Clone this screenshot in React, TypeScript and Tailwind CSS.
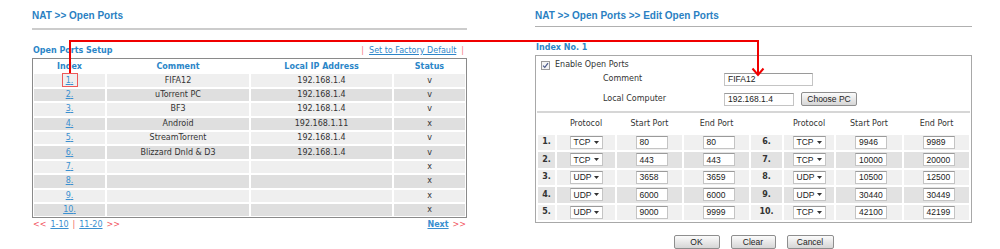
import React from 'react'

const verdana = "font-['DejaVu_Sans',Verdana,sans-serif]"
const arial = "font-['Liberation_Sans',Arial,sans-serif]"

interface PortEntry {
  comment: string
  ip: string
  status: string
}

const entries: PortEntry[] = [
  { comment: 'FIFA12', ip: '192.168.1.4', status: 'v' },
  { comment: 'uTorrent PC', ip: '192.168.1.4', status: 'v' },
  { comment: 'BF3', ip: '192.168.1.4', status: 'v' },
  { comment: 'Android', ip: '192.168.1.11', status: 'x' },
  { comment: 'StreamTorrent', ip: '192.168.1.4', status: 'v' },
  { comment: 'Blizzard Dnld & D3', ip: '192.168.1.4', status: 'v' },
  { comment: '', ip: '', status: 'x' },
  { comment: '', ip: '', status: 'x' },
  { comment: '', ip: '', status: 'x' },
  { comment: '', ip: '', status: 'x' }
]

type PortRange = [string, string, string]

const portRows: { left: PortRange; right: PortRange }[] = [
  { left: ['TCP', '80', '80'], right: ['TCP', '9946', '9989'] },
  { left: ['TCP', '443', '443'], right: ['TCP', '10000', '20000'] },
  { left: ['UDP', '3658', '3659'], right: ['UDP', '10500', '12500'] },
  { left: ['UDP', '6000', '6000'], right: ['UDP', '30440', '30449'] },
  { left: ['UDP', '9000', '9999'], right: ['TCP', '42100', '42199'] }
]

const Cell = ({ bg, children, className = '' }: { bg: string; children?: React.ReactNode; className?: string }) => (
  <div className={`${bg} flex items-center justify-center ${className}`}>{children}</div>
)

const TextBox = ({ value, className = '' }: { value: string; className?: string }) => (
  <div
    className={`h-[13px] bg-white border border-[#c4c4c4] border-t-[#9a9a9a] pl-[3px] flex items-center text-[8.5px] leading-[10px] text-[#222] ${arial} ${className}`}
  >
    {value}
  </div>
)

const SelectBox = ({ value }: { value: string }) => (
  <div
    className={`w-[33px] h-[13px] bg-white border border-[#c4c4c4] border-t-[#9a9a9a] pl-[3px] pr-[3px] flex items-center justify-between text-[8.5px] leading-[10px] text-[#222] ${arial}`}
  >
    <span>{value}</span>
    <svg width="5" height="3" viewBox="0 0 5 3">
      <path d="M0 0h5L2.5 3z" fill="#333" />
    </svg>
  </div>
)

const GrayButton = ({ label, className = '' }: { label: string; className?: string }) => (
  <div
    className={`h-[14px] flex items-center justify-center rounded-[2px] border border-[#8e8e8e] bg-gradient-to-b from-[#fbfbfb] to-[#d6d6d6] text-[8.5px] leading-[10px] text-[#222] ${arial} ${className}`}
  >
    {label}
  </div>
)

const OpenPortsList = () => (
  <div className="ml-[32px] w-[435px]">
    <div className={`pt-[10px] text-[10px] leading-[12px] font-bold text-[#2a7fc2] ${arial}`}>NAT &gt;&gt; Open Ports</div>
    <div className="mt-[6px] h-[2px] bg-[#cccccc]" />
    <div className={`mt-[16px] flex items-center justify-between text-[8px] leading-[10px] ${verdana}`}>
      <span className="pl-[1px] font-bold text-[#2b86c8]">Open Ports Setup</span>
      <span className="flex items-center gap-[5px] pr-[3px]">
        <span className="text-[#f47b86]">|</span>
        <span className="text-[#2e86c9] underline">Set to Factory Default</span>
        <span className="text-[#f47b86]">|</span>
      </span>
    </div>
    <div
      className={`mt-[2px] border border-[#8a8a8a] p-[1px] grid grid-cols-[71px_142px_141px_71px] gap-[2px] auto-rows-[12.4px] text-[8px] leading-[10px] text-[#333] ${verdana}`}
    >
      <Cell bg="bg-white" className="h-[13px] font-bold text-[#2b86c8]">Index</Cell>
      <Cell bg="bg-white" className="h-[13px] font-bold text-[#2b86c8]">Comment</Cell>
      <Cell bg="bg-white" className="h-[13px] font-bold text-[#2b86c8]">Local IP Address</Cell>
      <Cell bg="bg-white" className="h-[13px] font-bold text-[#2b86c8]">Status</Cell>
      {entries.map((entry, i) => {
        const bg = i % 2 === 0 ? 'bg-[#efefef]' : 'bg-[#dfdfdf]'
        return (
          <React.Fragment key={i}>
            <Cell bg={bg}>
              <span className="text-[#3a8fd0] underline">{i + 1}.</span>
            </Cell>
            <Cell bg={bg}>{entry.comment}</Cell>
            <Cell bg={bg}>{entry.ip}</Cell>
            <Cell bg={bg}>{entry.status}</Cell>
          </React.Fragment>
        )
      })}
    </div>
    <div className={`mt-[2px] flex items-center justify-between text-[8px] leading-[10px] ${verdana}`}>
      <span className="pl-[1px] flex gap-[4px]">
        <span className="text-[#f2545e]">&lt;&lt;</span>
        <span className="text-[#3a8fd0] underline">1-10</span>
        <span className="text-[#f2545e]">|</span>
        <span className="text-[#3a8fd0] underline">11-20</span>
        <span className="text-[#f2545e]">&gt;&gt;</span>
      </span>
      <span className="pr-[1px] flex gap-[4px]">
        <span className="text-[#3a8fd0] underline font-bold">Next</span>
        <span className="text-[#f2545e]">&gt;&gt;</span>
      </span>
    </div>
  </div>
)

const PortCells = ({ num, range, bg }: { num: number; range: PortRange; bg: string }) => (
  <>
    <Cell bg={bg} className="font-bold">{num}.</Cell>
    <Cell bg={bg}>
      <SelectBox value={range[0]} />
    </Cell>
    <Cell bg={bg}>
      <TextBox value={range[1]} className="w-[32px] ml-[4px]" />
    </Cell>
    <Cell bg={bg}>
      <TextBox value={range[2]} className="w-[32px] ml-[4px]" />
    </Cell>
  </>
)

const EditOpenPorts = () => (
  <div className="ml-[68px] w-[437px]">
    <div className={`pt-[10px] text-[10px] leading-[12px] font-bold text-[#2a7fc2] ${arial}`}>
      NAT &gt;&gt; Open Ports &gt;&gt; Edit Open Ports
    </div>
    <div className="mt-[4px] h-px bg-[#b0b0b0]" />
    <div className={`mt-[16px] pl-[1px] text-[8px] leading-[10px] font-bold text-[#2b86c8] ${verdana}`}>Index No. 1</div>
    <div className={`mt-[2px] border border-[#a8a8a8] pb-[2px] text-[8px] leading-[10px] text-[#333] ${verdana}`}>
      <div className="mt-[4px] h-[10px] pl-[5px] flex items-center gap-[5px]">
        <svg width="9" height="9" viewBox="0 0 9 9">
          <rect x="0.5" y="0.5" width="8" height="8" fill="#f4f4f4" stroke="#9a9a9a" />
          <path d="M2 4.6l1.8 1.8L7 2.2" fill="none" stroke="#4a5a8a" strokeWidth="1.2" />
        </svg>
        <span>Enable Open Ports</span>
      </div>
      <div className="mt-[2px] h-[14px] flex items-center">
        <span className="ml-[67px] w-[121px]">Comment</span>
        <TextBox value="FIFA12" className="w-[89px]" />
      </div>
      <div className="mt-[6px] h-[14px] flex items-center">
        <span className="ml-[67px] w-[121px]">Local Computer</span>
        <TextBox value="192.168.1.4" className="w-[70px]" />
        <GrayButton label="Choose PC" className="ml-[7px] w-[56px]" />
      </div>
      <div className="mt-[5px] mx-px h-[2px] bg-[#d6d6d6]" />
      <div className="mt-[4px] px-[2px] grid grid-cols-[17px_58px_65px_65px_31px_50px_66px_65px] gap-[2px] auto-rows-[15.5px]">
        <div className="h-[14px]" />
        <Cell bg="bg-white" className="h-[14px]">Protocol</Cell>
        <Cell bg="bg-white" className="h-[14px]">Start Port</Cell>
        <Cell bg="bg-white" className="h-[14px]">End Port</Cell>
        <div className="h-[14px]" />
        <Cell bg="bg-white" className="h-[14px]">Protocol</Cell>
        <Cell bg="bg-white" className="h-[14px]">Start Port</Cell>
        <Cell bg="bg-white" className="h-[14px]">End Port</Cell>
        {portRows.map((row, i) => {
          const bg = i % 2 === 0 ? 'bg-[#f0f0f0]' : 'bg-[#e2e2e2]'
          return (
            <React.Fragment key={i}>
              <PortCells num={i + 1} range={row.left} bg={bg} />
              <PortCells num={i + 6} range={row.right} bg={bg} />
            </React.Fragment>
          )
        })}
      </div>
    </div>
    <div className="mt-[12px] flex justify-center gap-[11px]">
      <GrayButton label="OK" className="w-[46px]" />
      <GrayButton label="Clear" className="w-[45px]" />
      <GrayButton label="Cancel" className="w-[47px]" />
    </div>
  </div>
)

// red callout linking index 1 to the edit form
const Callout = () => (
  <svg className="absolute left-0 top-0 pointer-events-none" width="1000" height="249" viewBox="0 0 1000 249">
    <rect x="62.5" y="73.5" width="15" height="13" fill="none" stroke="#ee5a5a" strokeWidth="1" />
    <path d="M70 73V41h688v34" fill="none" stroke="#f00000" strokeWidth="2" />
    <path d="M752.5 68.5L758 75l5.5-6.5" fill="none" stroke="#f00000" strokeWidth="2" />
  </svg>
)

export default function App() {
  return (
    <div className="relative w-[1000px] h-[249px] overflow-hidden bg-white flex">
      <OpenPortsList />
      <EditOpenPorts />
      <Callout />
    </div>
  )
}
